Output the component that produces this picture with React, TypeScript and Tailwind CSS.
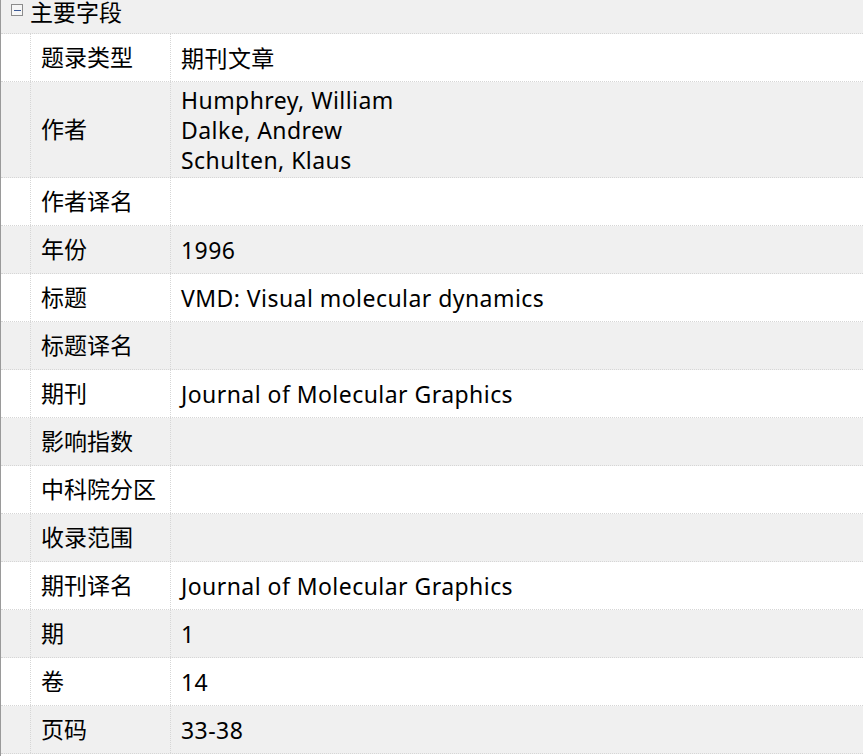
import React from "react";

const rows: { label: string; value: string[] }[] = [
  { label: "题录类型", value: ["期刊文章"] },
  { label: "作者", value: ["Humphrey, William", "Dalke, Andrew", "Schulten, Klaus"] },
  { label: "作者译名", value: [] },
  { label: "年份", value: ["1996"] },
  { label: "标题", value: ["VMD: Visual molecular dynamics"] },
  { label: "标题译名", value: [] },
  { label: "期刊", value: ["Journal of Molecular Graphics"] },
  { label: "影响指数", value: [] },
  { label: "中科院分区", value: [] },
  { label: "收录范围", value: [] },
  { label: "期刊译名", value: ["Journal of Molecular Graphics"] },
  { label: "期", value: ["1"] },
  { label: "卷", value: ["14"] },
  { label: "页码", value: ["33-38"] },
];

export default function App() {
  return (
    <div
      className="w-[863px] h-[756px] overflow-hidden bg-white text-black border-l border-[#9a9a9a]"
      style={{ fontFamily: '"Noto Sans", "Noto Sans CJK SC", sans-serif' }}
    >
      {/* Group header */}
      <div className="h-[34px] bg-[#f0f0f0] flex items-start border-b border-dotted border-[#d6d6d6]">
        <div className="w-[29px] flex justify-center pt-[4px] pl-[3px]">
          <div className="w-[12px] h-[12px] border border-[#8c8c8c] bg-[#f6f6f6] flex items-center justify-center">
            <div className="w-[7px] h-px bg-[#3c5a96]" />
          </div>
        </div>
        <span className="text-[23px] leading-[24px]">主要字段</span>
      </div>

      {rows.map((row, i) => (
        <div
          key={row.label}
          className={`flex border-b border-dotted border-[#d6d6d6] ${i % 2 === 1 ? "bg-[#f0f0f0]" : "bg-white"}`}
        >
          <div className="w-[30px] shrink-0 border-r border-dotted border-[#d6d6d6]" />
          <div className="w-[140px] shrink-0 border-r border-dotted border-[#d6d6d6] flex items-center pl-[10px] text-[23px]">
            {row.label}
          </div>
          <div
            className={`flex-1 flex flex-col justify-center pl-[10px] text-[23px] tracking-[0.45px] leading-[30px] ${
              row.value.length > 1 ? "h-[95px]" : "h-[47px]"
            }`}
          >
            {row.value.map((v) => (
              <div key={v}>{v}</div>
            ))}
          </div>
        </div>
      ))}
    </div>
  );
}
